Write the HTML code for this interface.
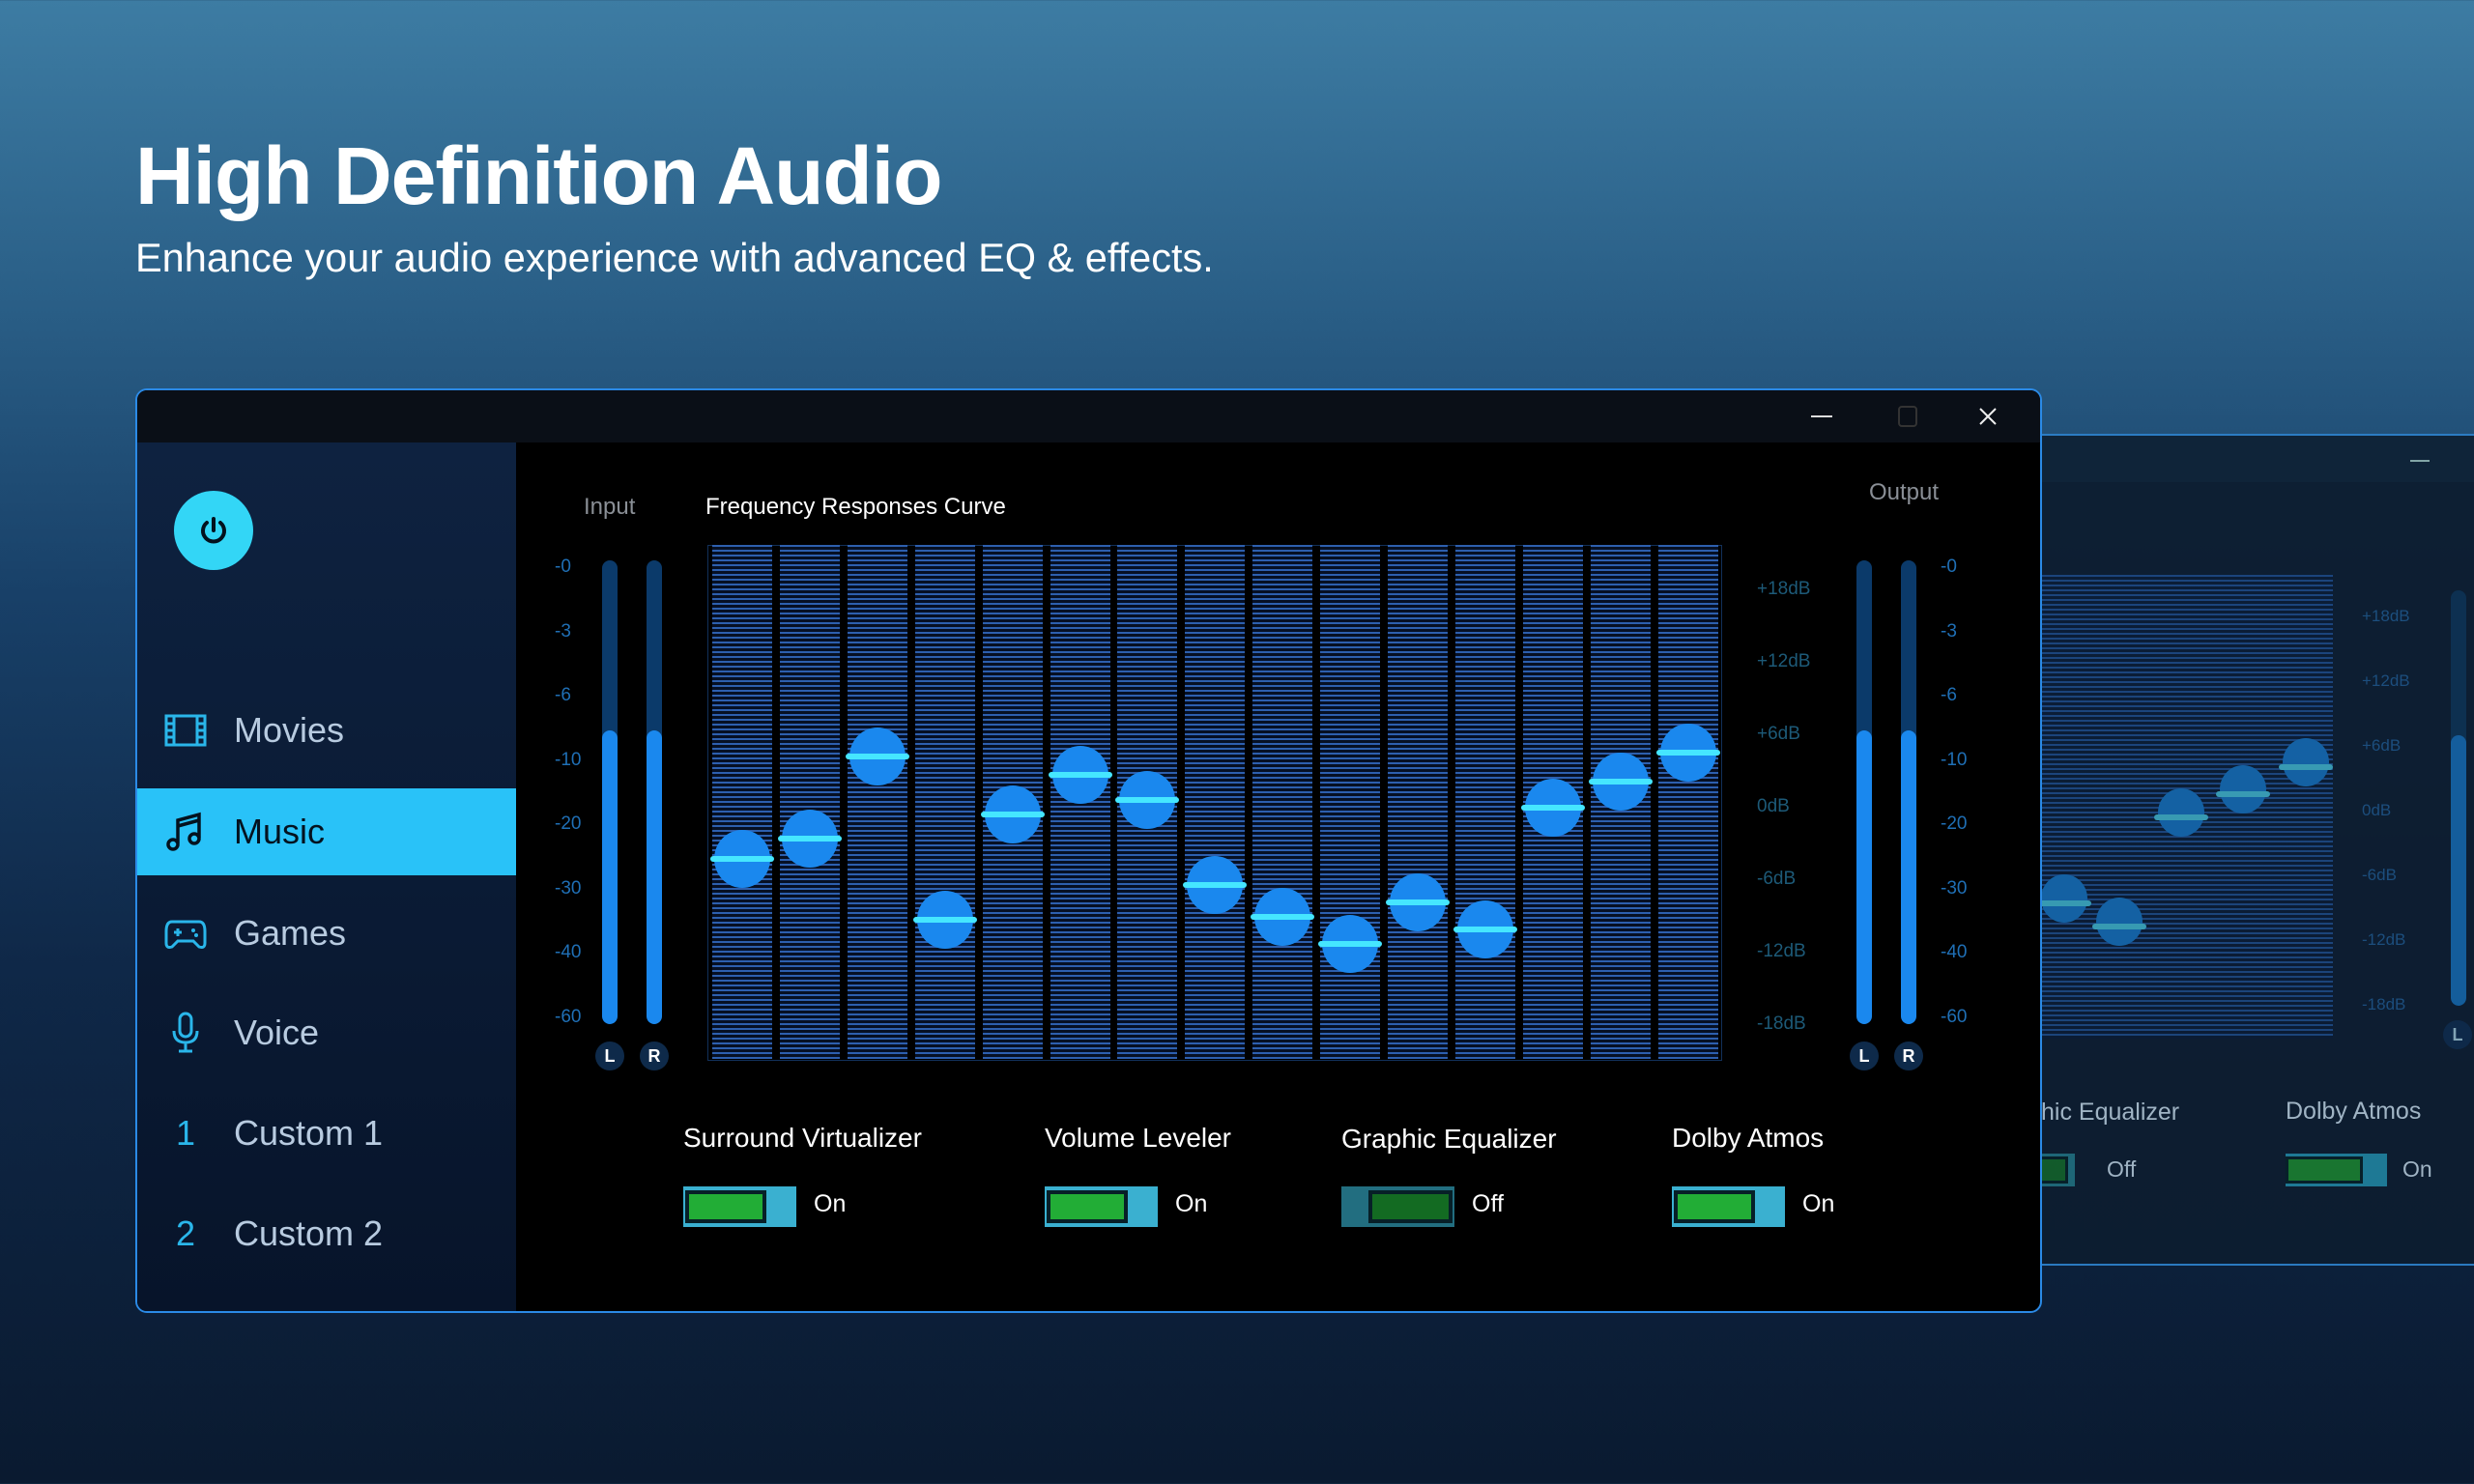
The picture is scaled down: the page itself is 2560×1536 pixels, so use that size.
<!DOCTYPE html>
<html><head><meta charset="utf-8"><style>
*{margin:0;padding:0;box-sizing:border-box}
body{width:2560px;height:1536px;overflow:hidden;position:relative;font-family:"Liberation Sans",sans-serif;background:linear-gradient(180deg,#3d7ca3 0%,#2a5f87 20%,#184068 40%,#0f2848 65%,#0a1a30 100%)}
.a{position:absolute}
h1{position:absolute;left:140px;top:134px;font-size:84px;color:#fff;font-weight:bold;letter-spacing:-1px}
.sub{left:140px;top:243px;font-size:41.5px;color:#fff}
.bg2{left:2100px;top:449px;width:520px;height:861px;background:#0d1d30;border:2px solid #2d7fc8;border-radius:10px;opacity:.95}
.win{left:140px;top:402px;width:1973px;height:957px;background:#000;border:2px solid #2b8ae6;border-radius:12px;overflow:hidden}
.tb{left:0;top:0;width:100%;height:54px;background:#0a0f17}
.side{left:0;top:54px;width:392px;height:903px;background:linear-gradient(180deg,#0e2240,#07142a)}
.nav{position:absolute;left:0;width:392px;height:90px;color:#b8cbe0;font-size:36px;line-height:90px;padding-left:100px}
.nav .ic{position:absolute;left:28px;top:23px;width:44px;height:44px}
.lbl{color:#1f6fb5;font-size:19px}
.bar{position:absolute;top:160px;width:62px;height:532px;background:repeating-linear-gradient(180deg,#2d5fae 0 2px,#061024 2px 5px)}
.knob{position:absolute;width:58px;height:60px;border-radius:50%;background:#1a88ee}
.knob::after{content:"";position:absolute;left:-4px;right:-4px;top:27px;height:6px;border-radius:3px;background:#45e6ff}
.bg2 .knob::after{background:#3aa0b8}
.mt{position:absolute;width:16px;border-radius:8px;background:#0b3a6a;overflow:hidden}
.mt i{position:absolute;left:0;right:0;bottom:0;background:#1a88ee;border-radius:8px}
.lr{position:absolute;width:30px;height:30px;border-radius:50%;background:#0e2a4a;color:#fff;font-size:18px;text-align:center;line-height:30px;font-weight:bold}
.tg{position:absolute;width:117px;height:42px;background:#3ab0d0}
.tg i{position:absolute;top:4px;height:34px;border:4px solid #072028;background:#22ad36}
.tl{position:absolute;color:#fff;font-size:28px}
</style></head><body>
<h1>High Definition Audio</h1>
<div class="a sub">Enhance your audio experience with advanced EQ &amp; effects.</div>

<div class="a bg2">
 <div class="a" style="left:0;top:0;width:100%;height:48px;background:#0f2236"></div>
 <div class="a" style="left:392px;top:25px;width:20px;height:2px;background:#8aa"></div>
 <div class="a" style="left:0;top:144px;width:312px;height:480px;background:repeating-linear-gradient(180deg,#1e4a86 0 2px,#0b1c34 2px 5px);opacity:.9"></div>
 <div class="knob" style="left:10px;top:454px;background:#1564a8;width:48px;height:50px"></div>
 <div class="knob" style="left:67px;top:478px;background:#1564a8;width:48px;height:50px"></div>
 <div class="knob" style="left:131px;top:365px;background:#1564a8;width:48px;height:50px"></div>
 <div class="knob" style="left:195px;top:341px;background:#1564a8;width:48px;height:50px"></div>
 <div class="knob" style="left:260px;top:313px;background:#1564a8;width:48px;height:50px"></div>
 <div class="a lbl" style="left:342px;top:153px;color:#1d5080;font-size:17px;line-height:67px">+18dB<br>+12dB<br>+6dB<br>0dB<br>-6dB<br>-12dB<br>-18dB</div>
 <div class="mt" style="left:434px;top:160px;height:430px;background:#0d3050"><i style="height:280px;background:#1560a0"></i></div>
 <div class="lr" style="left:426px;top:605px;color:#8ab">L</div>
 <div class="tl" style="left:10px;top:686px;color:#a8bccc;font-size:25px">hic Equalizer</div>
 <div class="tl" style="left:263px;top:685px;color:#a8bccc;font-size:25px">Dolby Atmos</div>
 <div class="tg" style="left:0;top:743px;width:45px;height:34px;background:#1f6a7a"><i style="left:0;top:3px;width:38px;height:28px;background:#135e2a;border-width:3px"></i></div>
 <div class="tl" style="left:78px;top:746px;color:#a8bccc;font-size:23px">Off</div>
 <div class="tg" style="left:263px;top:743px;width:105px;height:34px;background:#1f7e9a"><i style="left:0;top:3px;width:80px;height:28px;background:#1a7a30;border-width:3px"></i></div>
 <div class="tl" style="left:384px;top:746px;color:#a8bccc;font-size:23px">On</div>
</div>

<div class="a win">
 <div class="a tb">
  <div class="a" style="left:1732px;top:26px;width:22px;height:2px;background:#ddd"></div>
  <div class="a" style="left:1822px;top:16px;width:20px;height:22px;border:2px solid #333;border-radius:4px"></div>
  <svg class="a" style="left:1905px;top:17px" width="20" height="20"><path d="M2 2L18 18M18 2L2 18" stroke="#eee" stroke-width="2"/></svg>
 </div>
 <div class="a side">
  <div class="a" style="left:38px;top:50px;width:82px;height:82px;border-radius:50%;background:#33d6f6"></div>
  <svg class="a" style="left:59px;top:71px" width="40" height="40" viewBox="0 0 40 40"><path d="M13 12A11 11 0 1 0 27 12" fill="none" stroke="#03121e" stroke-width="4" stroke-linecap="round"/><path d="M20 8V20" stroke="#03121e" stroke-width="4" stroke-linecap="round"/></svg>
  <div class="nav" style="top:253px"><svg class="ic" viewBox="0 0 44 44"><rect x="2" y="7" width="40" height="30" fill="none" stroke="#2ab6ea" stroke-width="3"/><path d="M10 7V37M34 7V37M2 15H10M2 22H10M2 29H10M34 15H42M34 22H42M34 29H42" stroke="#2ab6ea" stroke-width="3"/></svg>Movies</div>
  <div class="nav" style="top:358px;background:#29c2f8;color:#04121f"><svg class="ic" viewBox="0 0 44 44"><path d="M14 34V10L36 4V28" fill="none" stroke="#04121f" stroke-width="3.5"/><path d="M14 16L36 10" stroke="#04121f" stroke-width="3.5"/><circle cx="9" cy="35" r="5" fill="none" stroke="#04121f" stroke-width="3.5"/><circle cx="31" cy="29" r="5" fill="none" stroke="#04121f" stroke-width="3.5"/></svg>Music</div>
  <div class="nav" style="top:463px"><svg class="ic" viewBox="0 0 44 44" style="left:24px;width:52px"><path d="M8 10H36Q42 10 42 20V32Q42 38 36 36L30 30H14L8 36Q2 38 2 32V20Q2 10 8 10Z" fill="none" stroke="#2ab6ea" stroke-width="3"/><path d="M10 21H18M14 17V25" stroke="#2ab6ea" stroke-width="3"/><circle cx="30" cy="19" r="2" fill="#2ab6ea"/><circle cx="33" cy="24" r="2" fill="#2ab6ea"/></svg>Games</div>
  <div class="nav" style="top:566px"><svg class="ic" viewBox="0 0 44 44"><rect x="16" y="2" width="12" height="24" rx="6" fill="none" stroke="#2ab6ea" stroke-width="3"/><path d="M10 20Q10 32 22 32Q34 32 34 20M22 32V40M15 41H29" fill="none" stroke="#2ab6ea" stroke-width="3"/></svg>Voice</div>
  <div class="nav" style="top:670px"><span class="a" style="left:40px;color:#2ab6ea">1</span>Custom 1</div>
  <div class="nav" style="top:774px"><span class="a" style="left:40px;color:#2ab6ea">2</span>Custom 2</div>
 </div>

 <div class="a" style="left:462px;top:107px;font-size:24px;color:#8a8f96">Input</div>
 <div class="a" style="left:588px;top:107px;font-size:24px;color:#fff">Frequency Responses Curve</div>
 <div class="a" style="left:1792px;top:92px;font-size:24px;color:#8a8f96">Output</div>
 <div class="a lbl" style="left:432px;top:150px;line-height:66.5px">-0<br>-3<br>-6<br>-10<br>-20<br>-30<br>-40<br>-60</div>
 <div class="mt" style="left:481px;top:176px;height:480px"><i style="height:304px"></i></div>
 <div class="mt" style="left:527px;top:176px;height:480px"><i style="height:304px"></i></div>
 <div class="lr" style="left:474px;top:674px">L</div>
 <div class="lr" style="left:520px;top:674px">R</div>

 <div class="a" style="left:590px;top:160px;width:1050px;height:534px;border:1px solid #12305a"></div>
 <div class="bar" style="left:595px"></div><div class="bar" style="left:665px"></div><div class="bar" style="left:735px"></div><div class="bar" style="left:805px"></div><div class="bar" style="left:875px"></div><div class="bar" style="left:945px"></div><div class="bar" style="left:1014px"></div><div class="bar" style="left:1084px"></div><div class="bar" style="left:1154px"></div><div class="bar" style="left:1224px"></div><div class="bar" style="left:1294px"></div><div class="bar" style="left:1364px"></div><div class="bar" style="left:1434px"></div><div class="bar" style="left:1504px"></div><div class="bar" style="left:1574px"></div>
 <div class="knob" style="left:597px;top:455px"></div><div class="knob" style="left:667px;top:434px"></div><div class="knob" style="left:737px;top:349px"></div><div class="knob" style="left:807px;top:518px"></div><div class="knob" style="left:877px;top:409px"></div><div class="knob" style="left:947px;top:368px"></div><div class="knob" style="left:1016px;top:394px"></div><div class="knob" style="left:1086px;top:482px"></div><div class="knob" style="left:1156px;top:515px"></div><div class="knob" style="left:1226px;top:543px"></div><div class="knob" style="left:1296px;top:500px"></div><div class="knob" style="left:1366px;top:528px"></div><div class="knob" style="left:1436px;top:402px"></div><div class="knob" style="left:1506px;top:375px"></div><div class="knob" style="left:1576px;top:345px"></div>

 <div class="a lbl" style="left:1676px;top:168px;line-height:75px;color:#1d5a78">+18dB<br>+12dB<br>+6dB<br>0dB<br>-6dB<br>-12dB<br>-18dB</div>
 <div class="mt" style="left:1779px;top:176px;height:480px"><i style="height:304px"></i></div>
 <div class="mt" style="left:1825px;top:176px;height:480px"><i style="height:304px"></i></div>
 <div class="lr" style="left:1772px;top:674px">L</div>
 <div class="lr" style="left:1818px;top:674px">R</div>
 <div class="a lbl" style="left:1866px;top:150px;line-height:66.5px">-0<br>-3<br>-6<br>-10<br>-20<br>-30<br>-40<br>-60</div>

 <div class="tl" style="left:565px;top:758px">Surround Virtualizer</div>
 <div class="tl" style="left:939px;top:758px">Volume Leveler</div>
 <div class="tl" style="left:1246px;top:759px">Graphic Equalizer</div>
 <div class="tl" style="left:1588px;top:758px">Dolby Atmos</div>
 <div class="tg" style="left:565px;top:824px"><i style="left:2px;width:84px"></i></div>
 <div class="tl" style="left:700px;top:828px;font-size:25px">On</div>
 <div class="tg" style="left:939px;top:824px"><i style="left:2px;width:84px"></i></div>
 <div class="tl" style="left:1074px;top:828px;font-size:25px">On</div>
 <div class="tg" style="left:1246px;top:824px;background:#226e80"><i style="left:28px;width:87px;background:#136b22"></i></div>
 <div class="tl" style="left:1381px;top:828px;font-size:25px">Off</div>
 <div class="tg" style="left:1588px;top:824px"><i style="left:2px;width:84px"></i></div>
 <div class="tl" style="left:1723px;top:828px;font-size:25px">On</div>
</div>
</body></html>
